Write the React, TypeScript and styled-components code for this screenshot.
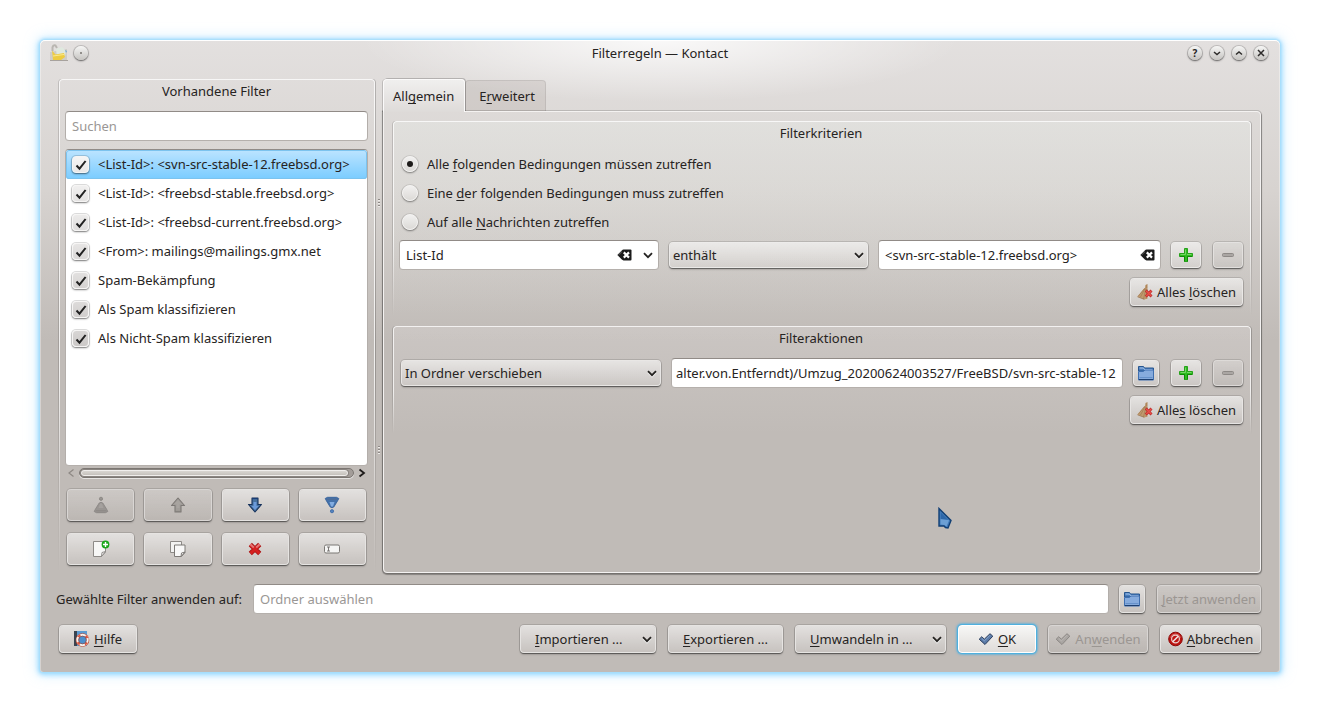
import React, { useState } from 'react';
import styled, { createGlobalStyle, css } from 'styled-components';

const GlobalStyle = createGlobalStyle`
  *, *::before, *::after { box-sizing: border-box; }
  body {
    margin: 0;
    background: #fff;
    color: #262322;
    font: 13px/18px "Noto Sans", "Open Sans", sans-serif;
  }
  button, input, select { font: inherit; color: inherit; margin: 0; }
  u {
    text-decoration: underline;
    text-decoration-thickness: 1px;
    text-decoration-skip-ink: none;
    text-underline-offset: 2px;
  }
`;

/* ---------- window ---------- */

const Desktop = styled.div`
  display: flex;
  min-height: 100vh;
  padding: 40px;
`;

const Dialog = styled.main`
  flex: 1;
  min-width: 0;
  display: flex;
  flex-direction: column;
  border-radius: 5px 5px 3px 3px;
  background:
    radial-gradient(ellipse 300px 62px at 50% 0, rgba(255, 255, 255, 0.8), rgba(255, 255, 255, 0.4) 50%, rgba(255, 255, 255, 0)),
    linear-gradient(#e3e0df 0, #d7d3d0 150px, #c0bbb7 300px);
  box-shadow:
    inset 0 1px 0 #fff,
    inset 1px 0 0 rgba(255, 255, 255, 0.35),
    inset -1px 0 0 rgba(255, 255, 255, 0.35),
    0 0 2px 1px #a6ddfb,
    0 1px 5px 2px rgba(112, 204, 255, 0.65),
    0 0 14px 3px rgba(150, 215, 255, 0.35);
`;

const TitleBar = styled.header`
  display: grid;
  grid-template-columns: 1fr auto 1fr;
  align-items: center;
  height: 26px;
  padding: 0 12px 0 10px;
`;

const WindowTitle = styled.h1`
  margin: 0;
  padding-left: 2px;
  font-size: 13px;
  line-height: 18px;
  font-weight: 400;
`;

const TitleSide = styled.div<{ $end?: boolean }>`
  display: flex;
  align-items: center;
  justify-content: ${(p) => (p.$end ? 'flex-end' : 'flex-start')};
  gap: ${(p) => (p.$end ? 8 : 6)}px;
`;

const RoundButton = styled.button`
  display: grid;
  place-items: center;
  width: 14px;
  height: 14px;
  padding: 0;
  border: 0;
  border-radius: 50%;
  background: linear-gradient(#f6f6f5, #c6c4c1);
  box-shadow: 0 0 0 1px rgba(0, 0, 0, 0.14), 0 1px 2px rgba(0, 0, 0, 0.5);
`;

const Body = styled.div`
  flex: 1;
  display: flex;
  padding: 13px 19px 0;
`;

/* ---------- shared parts ---------- */

const frameLines = css`
  position: relative;
  &::before {
    content: '';
    position: absolute;
    inset: 0;
    border: 1px solid rgba(255, 255, 255, 0.75);
    border-bottom: 0;
    border-radius: 4px 4px 0 0;
    box-shadow: -1px 0 0 rgba(0, 0, 0, 0.14), 1px 0 0 rgba(0, 0, 0, 0.2), 0 -1px 0 rgba(0, 0, 0, 0.08);
    mask-image: linear-gradient(#000 60%, transparent);
    mask-clip: no-clip;
    pointer-events: none;
  }
`;

const GroupTitle = styled.h2`
  margin: 0;
  font-size: 13px;
  line-height: 18px;
  font-weight: 400;
  text-align: center;
`;

const raised = css`
  border: 1px solid rgba(255, 255, 255, 0.6);
  border-radius: 4px;
  background: linear-gradient(rgba(255, 255, 255, 0.55), rgba(255, 255, 255, 0.12));
  background-clip: padding-box;
  box-shadow: 0 0 0 1px rgba(0, 0, 0, 0.12), 0 1px 1px rgba(0, 0, 0, 0.4), 0 2px 2px rgba(0, 0, 0, 0.12);
`;

const Button = styled.button<{ $w?: number; $h?: number; $focus?: boolean; $menu?: boolean }>`
  ${raised}
  display: flex;
  align-items: center;
  justify-content: ${(p) => (p.$menu ? 'space-between' : 'center')};
  gap: 4px;
  flex: none;
  width: ${(p) => (p.$w ? `${p.$w}px` : 'auto')};
  height: ${(p) => p.$h ?? 28}px;
  padding: ${(p) => (p.$menu ? '0 2px 0 14px' : '0')};
  white-space: nowrap;
  &:disabled {
    color: #9b9692;
    border-color: rgba(255, 255, 255, 0.4);
    background: linear-gradient(rgba(255, 255, 255, 0.2), rgba(0, 0, 0, 0.02));
    background-clip: padding-box;
  }
  ${(p) =>
    p.$focus &&
    css`
      background: linear-gradient(#f7f7f6, #dfdcd9);
      border-color: #fff;
      box-shadow: 0 0 0 1px #4fb0de, 0 0 2px 2px rgba(80, 175, 225, 0.7);
    `}
`;

const sunken = css`
  border: 1px solid;
  border-color: #918b87 #b3aeaa #b5b0ac;
  border-radius: 4px;
  background: #fff;
`;

const TextInput = styled.input<{ $tight?: boolean }>`
  ${sunken}
  flex: 1;
  min-width: 0;
  width: 100%;
  height: 30px;
  padding: 0 6px 0 ${(p) => (p.$tight ? 4 : 6)}px;
  outline: 0;
  &::placeholder { color: #9a9795; opacity: 1; }
`;

const FieldBox = styled.div`
  ${sunken}
  min-width: 0;
  display: flex;
  align-items: center;
  gap: 10px;
  height: 30px;
  padding: 0 5px 0 6px;
`;

const BareInput = styled.input`
  flex: 1;
  min-width: 0;
  padding: 0;
  border: 0;
  outline: 0;
  background: none;
`;

const BareButton = styled.button`
  display: grid;
  place-items: center;
  padding: 0;
  border: 0;
  background: none;
`;

const MenuButton = styled(BareButton)`
  margin-right: -1px;
`;

const SelectBox = styled.div`
  ${raised}
  min-width: 0;
  display: grid;
  align-items: center;
  height: 26px;
  & > * { grid-area: 1 / 1; }
  & > svg { justify-self: end; margin-right: 2px; pointer-events: none; }
`;

const NativeSelect = styled.select`
  appearance: none;
  width: 100%;
  height: 24px;
  padding: 0 18px 0 3px;
  border: 0;
  outline: 0;
  background: none;
`;

/* ---------- left column ---------- */

const FilterPanel = styled.section`
  ${frameLines}
  display: flex;
  flex-direction: column;
  width: 316px;
  padding: 3px 7px 8px 6px;
`;

const SearchRow = styled.div`
  display: flex;
  padding: 11px 0 8px;
`;

const FilterList = styled.ul`
  ${sunken}
  flex: 1;
  min-height: 205px;
  margin: 0;
  padding: 0;
  list-style: none;
  overflow: hidden;
`;

const FilterItem = styled.li<{ $selected?: boolean }>`
  height: 29px;
  border-radius: 3px;
  background: ${(p) => (p.$selected ? 'linear-gradient(#bce4ff, #7accff)' : 'none')};
  box-shadow: ${(p) => (p.$selected ? 'inset 0 0 0 1px #7cc3ee' : 'none')};
`;

const CheckLabel = styled.label`
  display: flex;
  align-items: center;
  gap: 9px;
  height: 28px;
  padding-left: 6px;
  white-space: nowrap;
`;

const CheckHolder = styled.span`
  display: grid;
  place-items: center;
  padding-top: 1px;
  & > * { grid-area: 1 / 1; }
  & > svg { pointer-events: none; visibility: hidden; }
  & > input:checked + svg { visibility: visible; }
`;

const CheckInput = styled.input<{ $shade: number }>`
  appearance: none;
  width: 17px;
  height: 17px;
  border: 1px solid #f6f5f4;
  border-radius: 4px;
  background: ${(p) => `linear-gradient(hsl(20 4% ${96 - p.$shade}%), hsl(20 4% ${91 - p.$shade}%))`};
  box-shadow: 0 0 0 1px rgba(0, 0, 0, 0.12), 0 1px 2px rgba(0, 0, 0, 0.45);
`;

const ScrollRow = styled.div`
  display: flex;
  align-items: center;
  justify-content: space-between;
  gap: 4px;
  height: 14px;
  padding: 0 2px;
  margin-bottom: 9px;
`;

const ScrollGroove = styled.div`
  flex: 1;
  height: 10px;
  padding: 1px 5px 1px 1px;
  border: 1px solid #7b7672;
  border-radius: 5px;
  background: #a39d99;
  box-shadow: 0 1px 0 rgba(255, 255, 255, 0.6);
`;

const ScrollThumb = styled.div`
  height: 6px;
  border: 1px solid #f0eeec;
  border-radius: 3px;
  background: linear-gradient(#d9d6d2, #c5c1bc);
  box-shadow: 0 0 0 1px #8a8581;
`;

const ToolGrid = styled.div`
  display: grid;
  grid-template-columns: repeat(4, 1fr);
  gap: 12px 10px;
  padding: 0 2px;
`;

const ToolButton = styled(Button)`
  height: 32px;
`;

const Splitter = styled.div`
  display: flex;
  flex-direction: column;
  align-items: center;
  justify-content: space-around;
  width: 8px;
`;

/* ---------- right column ---------- */

const TabArea = styled.section`
  flex: 1;
  min-width: 0;
  display: flex;
  flex-direction: column;
`;

const TabBar = styled.div`
  display: flex;
  align-items: flex-end;
  height: 32px;
`;

const Tab = styled.button<{ $active?: boolean }>`
  border: 0;
  border-radius: 4px 4px 0 0;
  ${(p) =>
    p.$active
      ? css`
          position: relative;
          z-index: 1;
          height: 33px;
          margin-bottom: -1px;
          padding: 0 10px 0 9px;
          border: 1px solid #fbfafa;
          border-bottom: 0;
          background: linear-gradient(#f0efee, #dedbd9);
          box-shadow: 1px -1px 0 rgba(0, 0, 0, 0.2), -1px 0 0 rgba(0, 0, 0, 0.15);
        `
      : css`
          height: 31px;
          padding: 0 10px 0 13px;
          border: 1px solid rgba(0, 0, 0, 0.08);
          border-bottom: 0;
          background: rgba(80, 50, 40, 0.09);
        `}
`;

const TabPane = styled.div`
  flex: 1;
  position: relative;
  padding: 9px;
  border: 1px solid #f4f2f1;
  border-radius: 0 4px 4px 4px;
  box-shadow: 0 0 0 1px rgba(0, 0, 0, 0.13), 0 1px 1px 1px rgba(0, 0, 0, 0.3);
`;

const Group = styled.section`
  ${frameLines}
  padding: 3px 8px 10px 6px;
  border-radius: 4px;
  background: linear-gradient(rgba(232, 236, 232, 0.35), rgba(255, 255, 255, 0));
  & + & {
    margin-top: 10px;
    background: linear-gradient(rgba(235, 230, 230, 0.25), rgba(255, 255, 255, 0));
  }
`;

const RadioList = styled.div`
  padding: 7px 0 4px 3px;
`;

const RadioLabel = styled.label`
  display: flex;
  align-items: center;
  gap: 9px;
  height: 29px;
`;

const RadioInput = styled.input`
  appearance: none;
  display: grid;
  place-items: center;
  width: 16px;
  height: 16px;
  border: 1px solid #f4f3f2;
  border-radius: 50%;
  background: linear-gradient(#f1f0ef, #dcdad7);
  box-shadow: 0 0 0 1px rgba(0, 0, 0, 0.08), 0 1px 2px rgba(0, 0, 0, 0.4);
  &:checked::after {
    content: '';
    width: 6px;
    height: 6px;
    border-radius: 50%;
    background: #1d1b1a;
  }
`;

const CriteriaRow = styled.div`
  display: grid;
  grid-template-columns: 260fr 199fr 283fr auto;
  align-items: center;
  gap: 10px;
`;

const ActionRow = styled.div`
  display: grid;
  grid-template-columns: 260fr 452fr auto;
  align-items: center;
  gap: 10px;
  padding: 11px 0 0 2px;
`;

const ButtonPair = styled.div`
  display: flex;
  gap: 12px;
`;

const ClearRow = styled.div`
  display: flex;
  justify-content: flex-end;
  padding-top: 8px;
`;

const Pointer = styled.svg`
  position: absolute;
  left: 554px;
  top: 395px;
  pointer-events: none;
`;

/* ---------- footer ---------- */

const ApplyRow = styled.div`
  display: flex;
  align-items: center;
  gap: 10px;
  padding: 11px 19px 0 16px;
`;

const ApplyLabel = styled.label`
  padding-right: 1px;
  white-space: nowrap;
`;

const Footer = styled.footer`
  display: flex;
  justify-content: space-between;
  padding: 11px 19px 19px;
`;

const FooterEnd = styled.div`
  display: flex;
  gap: 12px;
`;

/* ---------- icons ---------- */

const Chevron = () => (
  <svg width="12" height="12" viewBox="0 0 12 12" fill="none">
    <path d="M2 5.500l4 4 4-4" stroke="#fff" strokeOpacity=".7" strokeWidth="1.600" />
    <path d="M2 4.200l4 4 4-4" stroke="#252321" strokeWidth="1.800" />
  </svg>
);

const Tick = () => (
  <svg width="12" height="12" viewBox="0 0 12 12" fill="none">
    <path d="M1.500 6.500l3 3.200L10.600 2" stroke="#222" strokeWidth="2" />
  </svg>
);

const ClearIcon = () => (
  <svg width="15" height="12" viewBox="0 0 15 12">
    <path d="M.3 6L4.800 1.400Q5.600.600 6.500.600h7q1 0 1 1v8.800q0 1-1 1h-7q-.900 0-1.700-.800z" fill="#1b1b1b" />
    <path d="M1.500 6L5 2.600" stroke="#777" strokeWidth=".8" />
    <path d="M6.800 3.400l5.200 5.200M12 3.400L6.800 8.600" stroke="#fff" strokeWidth="2.200" />
  </svg>
);

const PlusIcon = () => (
  <svg width="16" height="16" viewBox="0 0 16 16">
    <path d="M6.500 1.500h3v5h5v3h-5v5h-3v-5h-5v-3h5z" fill="#2fbb20" stroke="#27a21b" strokeLinejoin="round" />
    <path d="M7.500 2.500v5h-5M9 7.500h4.500" stroke="#74d764" fill="none" />
    <path d="M2 9.500h4.500v5M9.500 14.500v-5H14" stroke="#0c8a04" fill="none" />
  </svg>
);

const MinusIcon = () => (
  <svg width="16" height="16" viewBox="0 0 16 16">
    <rect x="2.500" y="6.500" width="11" height="3" rx="1" fill="#aaa6a3" stroke="#8d8986" />
  </svg>
);

const FolderIcon = () => (
  <svg width="16" height="16" viewBox="0 0 16 16">
    <path d="M.5 1.500h5l1 1.500h9v3H.5z" fill="#4a7cbc" stroke="#27568f" />
    <path d="M1.500 3h4l1 1.500h8" stroke="#a9c8ec" fill="none" />
    <path d="M.5 6.500h5l1.500-1.500h8.500v10H.5z" fill="#86abdd" stroke="#3f6fb0" />
    <path d="M1 14.500h14" stroke="#1d3f70" />
    <path d="M1.500 12.500h13" stroke="#6691ca" />
  </svg>
);

const BroomIcon = () => (
  <svg width="16" height="16" viewBox="0 0 16 16">
    <path d="M8.500 1L10.500 0v4.500L8 5z" fill="#b08658" />
    <path d="M7.500 4l3 .5v10.200L7 15.600.3 12.500z" fill="#c09a6e" />
    <path d="M8 4.500L3.500 13M9 4.500L6.500 15M10 5l-.8 9.500M7.500 4.500l-6 7.500" stroke="#9a744d" strokeWidth=".6" fill="none" />
    <path d="M.5 12.800l6.800 2.500" stroke="#987656" strokeWidth=".8" />
    <path d="M8.800 6.500l5.700 6M14.500 6.500l-5.700 6" stroke="#bf2b2a" strokeWidth="2.800" />
    <path d="M9.200 7l5 5M14.200 7l-5 5" stroke="#e8504a" strokeWidth="1.400" />
  </svg>
);

const FunnelIcon = ({ up }: { up?: boolean }) => (
  <svg width="16" height="18" viewBox="0 0 16 18">
    <g transform={up ? 'rotate(180 8 9)' : undefined}>
      <path d="M1.200 2.500l2.300-1.200h9l2.300 1.200L13.500 5l-3.700 6q-1.800 1.500-3.600 0L2.500 5z" fill={up ? '#999592' : '#4472ab'} stroke={up ? '#878380' : '#2f5c98'} strokeWidth=".8" />
      <path d="M2.500 2.500h11L13 4H3z" fill={up ? '#8f8b88' : '#4d6d99'} />
      <path d="M5.500 6h5L9 10.500H7z" fill={up ? '#a5a19e' : '#82ade2'} />
      <circle cx="8" cy="15.200" r="1.600" fill={up ? '#999592' : '#5584c0'} stroke={up ? '#85817e' : '#3a67a3'} strokeWidth=".8" />
    </g>
  </svg>
);

const ArrowIcon = ({ up }: { up?: boolean }) => (
  <svg width="16" height="18" viewBox="0 0 16 18">
    <g transform={up ? 'rotate(180 8 9)' : undefined}>
      <path d="M5 2h6v6.500h3.500L8 16 1.500 8.500H5z" fill={up ? '#a19d99' : '#47719f'} stroke={up ? '#7c7875' : '#16325c'} strokeWidth="1.100" strokeLinejoin="round" />
      <path d="M6.500 6v4h-2L8 14l3.500-4h-2V6z" fill={up ? '#a8a4a0' : '#6b9ada'} />
      <path d="M5.500 2.600h5" stroke={up ? '#85817e' : '#173b76'} />
    </g>
  </svg>
);

const NewDocIcon = () => (
  <svg width="18" height="18" viewBox="0 0 18 18">
    <path d="M1.500 1.500h12v10.500l-4 4.500h-8z" fill="#f7f7f6" stroke="#8d8a87" />
    <path d="M9.500 16.500l.5-4 3.500-1z" fill="#fff" stroke="#8d8a87" />
    <circle cx="13.500" cy="4.500" r="3.900" fill="#1aa61a" />
    <path d="M13.500 2v5M11 4.500h5" stroke="#fff" strokeWidth="1.400" />
  </svg>
);

const CopyIcon = () => (
  <svg width="18" height="18" viewBox="0 0 18 18">
    <path d="M1.500 1.500h11v11h-11z" fill="#f2f2f1" stroke="#8d8a87" />
    <path d="M5.500 5h10.500v7.500l-3.500 4h-7z" fill="#f8f8f8" stroke="#7d7a77" />
    <path d="M12 16.500l.5-3.500 3.500-1z" fill="#fff" stroke="#7d7a77" />
  </svg>
);

const DeleteIcon = () => (
  <svg width="16" height="16" viewBox="0 0 16 16">
    <path d="M3.300 3.500l9.400 9M12.700 3.500l-9.400 9" stroke="#a81414" strokeWidth="4.600" />
    <path d="M3.500 4l9 8.300M12.500 4l-9 8.300" stroke="#d62020" strokeWidth="3" />
    <path d="M3.300 3.300l3.500 3.200M12.700 3.300L9.200 6.500" stroke="#e77474" strokeWidth="2" />
  </svg>
);

const RenameIcon = () => (
  <svg width="16" height="16" viewBox="0 0 16 16">
    <rect x=".5" y="4" width="15" height="8" rx="1.500" fill="#f5f5f4" stroke="#7b7875" />
    <path d="M3 6h3M3 10h3M4.500 6v4" stroke="#6f6c6a" strokeWidth=".9" />
  </svg>
);

const HelpIcon = () => (
  <svg width="16" height="16" viewBox="0 0 16 16">
    <rect x="0" y="0" width="13" height="15" fill="#5a9bd2" />
    <rect x="0" y="0" width="3" height="15" fill="#3a4350" />
    <circle cx="8.500" cy="9" r="6.800" fill="#b8472f" />
    <circle cx="8.500" cy="9" r="6.200" fill="#f6f2ef" />
    <circle cx="8.500" cy="9" r="5.200" fill="none" stroke="#e2553d" strokeWidth="2" strokeDasharray="2.700 5.468" strokeDashoffset="-2.700" />
    <circle cx="8.500" cy="9" r="3.900" fill="#4a8fce" stroke="#8c4a42" strokeWidth=".8" />
  </svg>
);

const CheckMark = ({ muted }: { muted?: boolean }) => (
  <svg width="16" height="16" viewBox="0 0 16 16">
    <path
      d="M1.200 8.200l2.600-2.500L6.300 8.200l5.700-5.500 2.800 2.500L7 13.500z"
      fill={muted ? '#aaa6a3' : '#5b7ba8'}
      stroke={muted ? '#8b8784' : '#2c3f5e'}
      strokeLinejoin="round"
    />
    <path d="M3.800 7.400L6.400 9.900 12 4.200" stroke={muted ? '#bbb7b4' : '#88a5cc'} fill="none" />
  </svg>
);

const CancelIcon = () => (
  <svg width="15" height="16" viewBox="0 0 15 16">
    <circle cx="7.500" cy="8" r="6.800" fill="#bd1311" stroke="#8c0907" />
    <path d="M2.500 6.500a5.300 5.300 0 0 1 10 0" stroke="#d86a66" fill="none" />
    <circle cx="7.500" cy="8" r="3.900" fill="none" stroke="#ead0cd" strokeWidth="1.200" />
    <path d="M4.700 10.800l5.600-5.600" stroke="#f0e4e2" strokeWidth="1.600" />
  </svg>
);

const AppIcon = () => (
  <svg width="18" height="18" viewBox="0 0 18 18">
    <path d="M0 8l17-3v12H0z" fill="#cfcdc8" />
    <path d="M0 16.500h18" stroke="#a7a29d" />
    <path d="M2.500 7V3.500Q3 .800 5.500 1.500L7 4" stroke="#b9b6b1" strokeWidth="2" fill="none" />
    <path d="M6 5l6-2 4 4-1 5-8 1z" fill="#dfe9df" />
    <path d="M2 6.500l3.500 4L14 9l1 4-4 3H3z" fill="#edcc42" />
    <path d="M3 12l11-1.500" stroke="#fbea8d" />
    <path d="M15 6l2 1-1 2z" fill="#6da5d5" />
  </svg>
);

const Glyph = ({ d }: { d: string }) => (
  <svg width="10" height="10" viewBox="0 0 10 10" fill="none">
    <path d={d} stroke="#2d2b2a" strokeWidth="1.500" />
  </svg>
);

const DotGlyph = () => (
  <svg width="10" height="10" viewBox="0 0 10 10">
    <circle cx="5" cy="5" r="1" fill="#77736f" />
  </svg>
);

const HelpGlyph = styled.span`
  font-size: 10px;
  line-height: 14px;
  font-weight: 700;
`;

const ScrollArrow = ({ left }: { left?: boolean }) => (
  <svg width="8" height="10" viewBox="0 0 8 10" fill="none">
    <path d={left ? 'M6.500 1.500L2 5l4.500 3.500' : 'M1.500 1.500L6 5 1.500 8.500'} stroke={left ? '#8d8884' : '#1d1b1a'} strokeWidth={left ? 1.2 : 1.8} />
  </svg>
);

const Grip = () => (
  <svg width="4" height="10" viewBox="0 0 4 10">
    <path d="M1 1h2v1H1zM1 4h2v1H1zM1 7h2v1H1z" fill="#8f8a87" />
    <path d="M1 2h2v1H1zM1 5h2v1H1zM1 8h2v1H1z" fill="#eeecea" />
  </svg>
);

/* ---------- content ---------- */

const filters = [
  '<List-Id>: <svn-src-stable-12.freebsd.org>',
  '<List-Id>: <freebsd-stable.freebsd.org>',
  '<List-Id>: <freebsd-current.freebsd.org>',
  '<From>: mailings@mailings.gmx.net',
  'Spam-Bekämpfung',
  'Als Spam klassifizieren',
  'Als Nicht-Spam klassifizieren',
];

const AddRemove = () => (
  <ButtonPair>
    <Button $w={30} $h={26} aria-label="Hinzufügen"><PlusIcon /></Button>
    <Button $w={30} $h={26} aria-label="Entfernen" disabled><MinusIcon /></Button>
  </ButtonPair>
);

export default function App() {
  const [mode, setMode] = useState('all');

  return (
    <>
      <GlobalStyle />
      <Desktop>
        <Dialog>
          <TitleBar>
            <TitleSide>
              <AppIcon />
              <RoundButton aria-label="Auf allen Arbeitsflächen"><DotGlyph /></RoundButton>
            </TitleSide>
            <WindowTitle>Filterregeln — Kontact</WindowTitle>
            <TitleSide $end>
              <RoundButton aria-label="Hilfe"><HelpGlyph>?</HelpGlyph></RoundButton>
              <RoundButton aria-label="Minimieren"><Glyph d="M2 4l3 2.500L8 4" /></RoundButton>
              <RoundButton aria-label="Maximieren"><Glyph d="M2 6.500L5 4l3 2.500" /></RoundButton>
              <RoundButton aria-label="Schließen"><Glyph d="M2 2l6 6M8 2L2 8" /></RoundButton>
            </TitleSide>
          </TitleBar>

          <Body>
            <FilterPanel>
              <GroupTitle>Vorhandene Filter</GroupTitle>
              <SearchRow>
                <TextInput type="text" placeholder="Suchen" aria-label="Suchen" />
              </SearchRow>
              <FilterList>
                {filters.map((name, i) => (
                  <FilterItem key={name} $selected={i === 0}>
                    <CheckLabel>
                      <CheckHolder>
                        <CheckInput type="checkbox" defaultChecked $shade={i * 2} />
                        <Tick />
                      </CheckHolder>
                      {name}
                    </CheckLabel>
                  </FilterItem>
                ))}
              </FilterList>
              <ScrollRow>
                <BareButton aria-label="Nach links"><ScrollArrow left /></BareButton>
                <ScrollGroove><ScrollThumb /></ScrollGroove>
                <BareButton aria-label="Nach rechts"><ScrollArrow /></BareButton>
              </ScrollRow>
              <ToolGrid>
                <ToolButton aria-label="Ganz nach oben" disabled><FunnelIcon up /></ToolButton>
                <ToolButton aria-label="Nach oben" disabled><ArrowIcon up /></ToolButton>
                <ToolButton aria-label="Nach unten"><ArrowIcon /></ToolButton>
                <ToolButton aria-label="Ganz nach unten"><FunnelIcon /></ToolButton>
                <ToolButton aria-label="Neu"><NewDocIcon /></ToolButton>
                <ToolButton aria-label="Kopieren"><CopyIcon /></ToolButton>
                <ToolButton aria-label="Löschen"><DeleteIcon /></ToolButton>
                <ToolButton aria-label="Umbenennen"><RenameIcon /></ToolButton>
              </ToolGrid>
            </FilterPanel>

            <Splitter>
              <Grip />
              <Grip />
            </Splitter>

            <TabArea>
              <TabBar role="tablist">
                <Tab role="tab" aria-selected $active>All<u>g</u>emein</Tab>
                <Tab role="tab" aria-selected={false}>E<u>r</u>weitert</Tab>
              </TabBar>
              <TabPane role="tabpanel">
                <Group>
                  <GroupTitle>Filterkriterien</GroupTitle>
                  <RadioList role="radiogroup">
                    <RadioLabel>
                      <RadioInput type="radio" name="mode" checked={mode === 'all'} onChange={() => setMode('all')} />
                      <span>Alle <u>f</u>olgenden Bedingungen müssen zutreffen</span>
                    </RadioLabel>
                    <RadioLabel>
                      <RadioInput type="radio" name="mode" checked={mode === 'any'} onChange={() => setMode('any')} />
                      <span>Eine <u>d</u>er folgenden Bedingungen muss zutreffen</span>
                    </RadioLabel>
                    <RadioLabel>
                      <RadioInput type="radio" name="mode" checked={mode === 'every'} onChange={() => setMode('every')} />
                      <span>Auf alle <u>N</u>achrichten zutreffen</span>
                    </RadioLabel>
                  </RadioList>
                  <CriteriaRow>
                    <FieldBox>
                      <BareInput defaultValue="List-Id" aria-label="Kopfzeile" />
                      <BareButton aria-label="Kopfzeile leeren"><ClearIcon /></BareButton>
                      <MenuButton aria-label="Kopfzeilen anzeigen"><Chevron /></MenuButton>
                    </FieldBox>
                    <SelectBox>
                      <NativeSelect aria-label="Vergleich"><option>enthält</option></NativeSelect>
                      <Chevron />
                    </SelectBox>
                    <FieldBox>
                      <BareInput defaultValue="<svn-src-stable-12.freebsd.org>" aria-label="Wert" />
                      <BareButton aria-label="Wert leeren"><ClearIcon /></BareButton>
                    </FieldBox>
                    <AddRemove />
                  </CriteriaRow>
                  <ClearRow>
                    <Button $w={113}><BroomIcon /><span>Alles <u>l</u>öschen</span></Button>
                  </ClearRow>
                </Group>

                <Group>
                  <GroupTitle>Filteraktionen</GroupTitle>
                  <ActionRow>
                    <SelectBox>
                      <NativeSelect aria-label="Aktion"><option>In Ordner verschieben</option></NativeSelect>
                      <Chevron />
                    </SelectBox>
                    <TextInput
                      $tight
                      aria-label="Zielordner"
                      defaultValue="alter.von.Entferndt)/Umzug_20200624003527/FreeBSD/svn-src-stable-12"
                    />
                    <ButtonPair>
                      <Button $w={26} $h={26} aria-label="Ordner wählen"><FolderIcon /></Button>
                      <AddRemove />
                    </ButtonPair>
                  </ActionRow>
                  <ClearRow>
                    <Button $w={113}><BroomIcon /><span>Alle<u>s</u> löschen</span></Button>
                  </ClearRow>
                </Group>

                <Pointer width="14" height="24" viewBox="0 0 14 24">
                  <path d="M1 1.500L13 13.500l-3 7.500-2.500-.5L6 19H1z" fill="#3f78b8" stroke="#123f74" strokeWidth="1.400" />
                  <path d="M2.500 5v12.500l4 .5 2 1.500 2.500-6z" fill="#6c9fd4" />
                  <path d="M2.500 5v7l8 1z" fill="#2d67a9" />
                </Pointer>
              </TabPane>
            </TabArea>
          </Body>

          <ApplyRow>
            <ApplyLabel htmlFor="target">Gewählte Filter anwenden auf:</ApplyLabel>
            <TextInput id="target" type="text" placeholder="Ordner auswählen" />
            <ButtonPair>
              <Button $w={26} $h={28} aria-label="Ordner wählen"><FolderIcon /></Button>
              <Button $w={104} disabled><span><u>J</u>etzt anwenden</span></Button>
            </ButtonPair>
          </ApplyRow>

          <Footer>
            <Button $w={78}><HelpIcon /><span><u>H</u>ilfe</span></Button>
            <FooterEnd>
              <Button $w={136} $menu><span><u>I</u>mportieren ...</span><Chevron /></Button>
              <Button $w={115}><span><u>E</u>xportieren ...</span></Button>
              <Button $w={151} $menu><span><u>U</u>mwandeln in ...</span><Chevron /></Button>
              <Button $w={78} $focus><CheckMark /><span><u>O</u>K</span></Button>
              <Button $w={100} disabled><CheckMark muted /><span>An<u>w</u>enden</span></Button>
              <Button $w={101}><CancelIcon /><span><u>A</u>bbrechen</span></Button>
            </FooterEnd>
          </Footer>
        </Dialog>
      </Desktop>
    </>
  );
}
